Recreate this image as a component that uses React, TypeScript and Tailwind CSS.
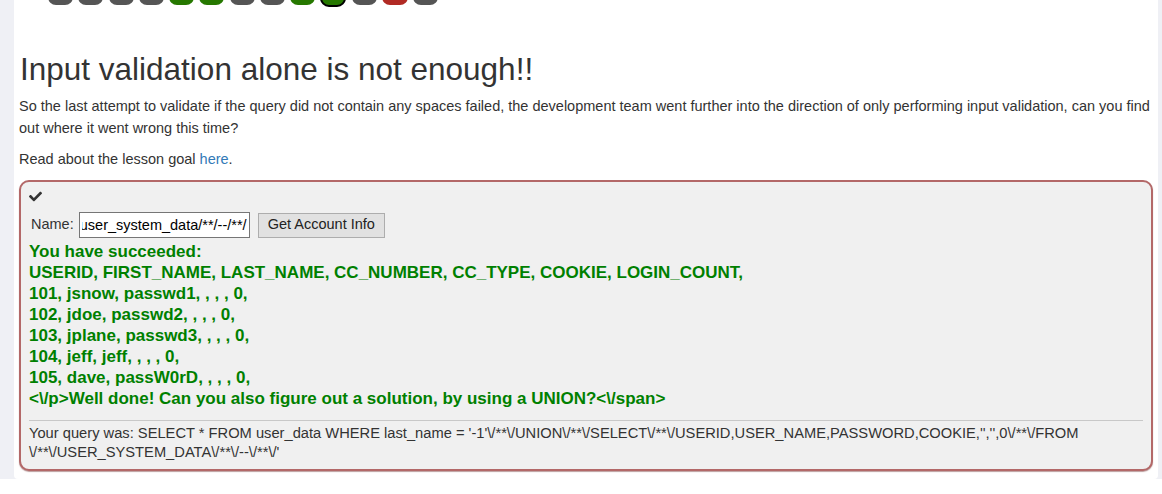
import { FaCheck } from 'react-icons/fa'

const pills = [
  'gray', 'gray', 'gray', 'gray', 'green', 'green', 'gray', 'gray', 'green', 'current', 'gray', 'red', 'gray',
]

const rows = [
  'You have succeeded:',
  'USERID, FIRST_NAME, LAST_NAME, CC_NUMBER, CC_TYPE, COOKIE, LOGIN_COUNT,',
  '101, jsnow, passwd1, , , , 0,',
  '102, jdoe, passwd2, , , , 0,',
  '103, jplane, passwd3, , , , 0,',
  '104, jeff, jeff, , , , 0,',
  '105, dave, passW0rD, , , , 0,',
  '<\\/p>Well done! Can you also figure out a solution, by using a UNION?<\\/span>',
]

const inputValue = "-1'/**/union/**/select/**/userid,user_name,password,cookie,'','',0/**/from/**/user_system_data/**/--/**/"

export default function App() {
  return (
    <div className="min-h-screen bg-[#eff0f5] pl-[14px] pr-[4px] font-['Liberation_Sans',Arial,sans-serif] text-[#333]">
      <div className="bg-white rounded-b-[4px] px-[5px] pb-[8px]">
        {/* lesson progress pills, mostly scrolled off the top */}
        <div className="-mt-[19px] flex items-start gap-[5.25px] pl-[29px]">
          {pills.map((p, i) => (
            <div
              key={i}
              className={
                p === 'current'
                  ? 'w-[26px] h-[26px] rounded-[9px] border-2 border-black bg-[#267800]'
                  : p === 'green'
                  ? 'w-[25px] h-[24px] rounded-[8px] bg-[#267800]'
                  : p === 'red'
                  ? 'w-[26px] h-[24px] rounded-[8px] bg-[#b12a24]'
                  : 'w-[25px] h-[24px] rounded-[8px] bg-[#555]'
              }
            />
          ))}
        </div>

        <h2 className="mt-[46px] ml-[1px] text-[31.5px] leading-[33px] font-normal">Input validation alone is not enough!!</h2>
        <p className="mt-[9px] text-[14.5px] leading-[22px]">
          So the last attempt to validate if the query did not contain any spaces failed, the development team went further into the direction of only performing input validation, can you find out where it went wrong this time?
        </p>
        <p className="mt-[9px] text-[14.5px] leading-[22px]">
          Read about the lesson goal <a className="text-[#337ab7]">here</a>.
        </p>

        <div className="mt-[10px] border-2 border-[#b36868] rounded-[10px] bg-[#f0f0f0] px-[8px] pt-[8px] pb-[7px] shadow-[0_1px_1px_rgba(120,60,60,0.5)]">
          <div className="h-[18px]">
            <FaCheck className="text-[#333] w-[13px] h-[13px]" />
          </div>
          <form className="mt-[4px] flex items-center text-[14.5px]" onSubmit={(e) => e.preventDefault()}>
            <label className="ml-[2px] mr-[5px]">Name:</label>
            <input
              readOnly
              value={inputValue}
              ref={(el) => {
                if (el) el.scrollLeft = el.scrollWidth
              }}
              className="w-[171px] h-[26px] border border-[#767676] bg-white px-[2px] text-[14.5px] text-black outline-none"
            />
            <button type="submit" className="ml-[8px] h-[25px] px-[9px] border border-[#adadad] bg-[#e1e1e1] text-[14.5px] text-[#222]">
              Get Account Info
            </button>
          </form>
          <div className="mt-[3px] text-[17px] leading-[21px] font-bold text-[#008000]">
            {rows.map((r, i) => (
              <div key={i}>{r}</div>
            ))}
          </div>
          <hr className="mt-[11px] border-t border-[#c8c8c8]" />
          <div className="mt-[3px] text-[14.7px] leading-[19px]">
            Your query was: SELECT * FROM user_data WHERE last_name = '-1'\/**\/UNION\/**\/SELECT\/**\/USERID,USER_NAME,PASSWORD,COOKIE,'','',0\/**\/FROM<wbr />\/**\/USER_SYSTEM_DATA\/**\/--\/**\/'
          </div>
        </div>
      </div>
    </div>
  )
}
